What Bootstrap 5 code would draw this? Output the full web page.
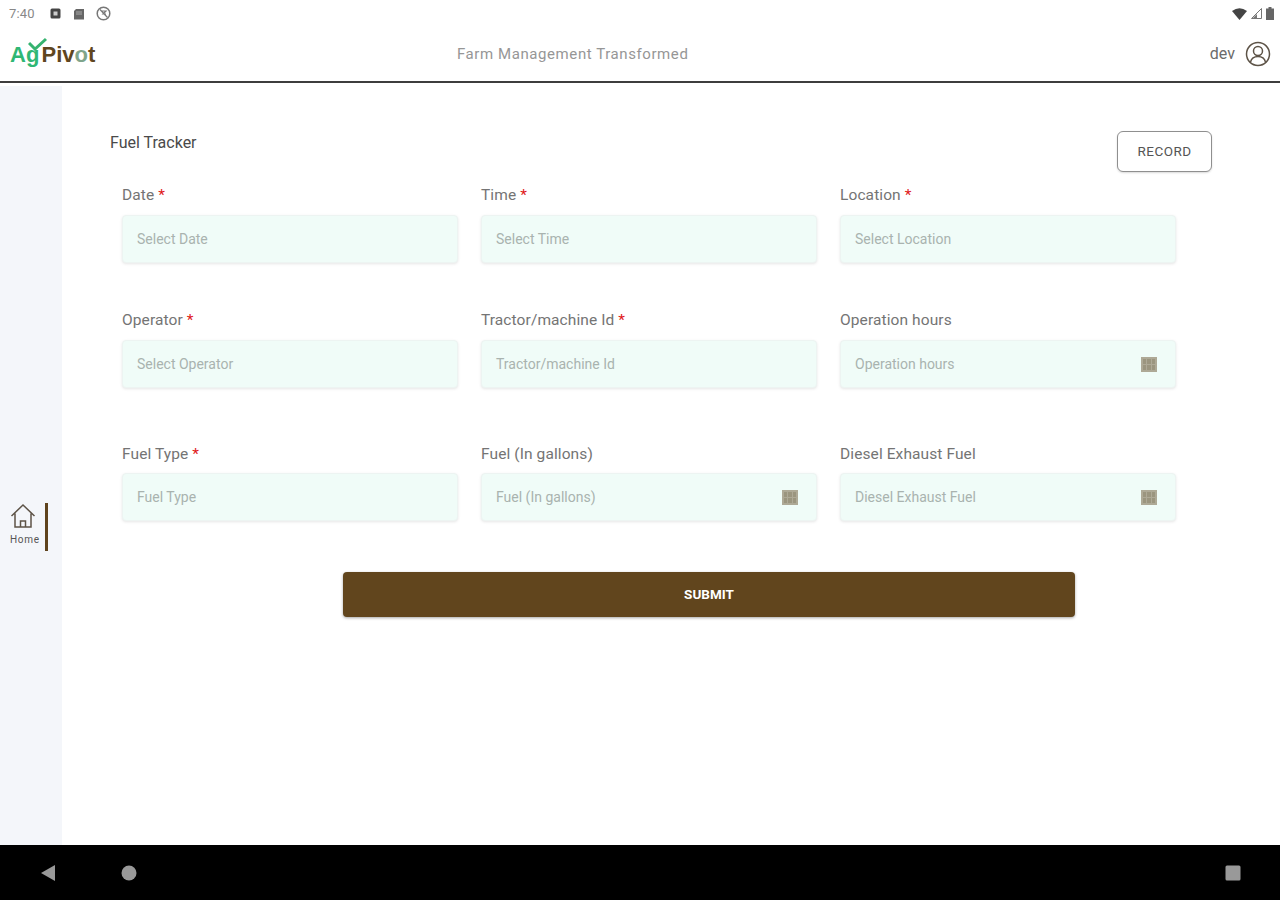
<!DOCTYPE html>
<html lang="en">
<head>
<meta charset="utf-8">
<title>Fuel Tracker</title>
<link href="https://cdn.jsdelivr.net/npm/bootstrap@5.3.0/dist/css/bootstrap.min.css" rel="stylesheet">
<style>
html,body{height:900px;overflow:hidden;background:#fff;font-family:Roboto,"Liberation Sans",sans-serif;}
.shell{height:900px;}
.statusbar{height:27px;padding:0 6px 0 9px;color:#555;font-size:12px;line-height:1;}
.status-time{color:#888;width:28px;margin-right:13px;font-size:13px;letter-spacing:.2px;}
.status-gap{margin-right:12px;}
.status-gap-last{margin-right:11px;}
.topbar{height:56px;border-bottom:2px solid #3d3d3d;padding:0 9px 0 10px;position:relative;}
.brand{width:447px;font-family:"Liberation Sans",sans-serif;font-weight:700;font-size:22px;line-height:1;position:relative;letter-spacing:.05px;margin-top:2px;}
.brand-ag{color:#2fb774;margin-right:2px;}
.brand-pv{color:#5f4620;}
.brand-o{color:#7fa58c;}
.brand-check{position:absolute;left:18px;top:-7px;}
.tagline{width:230px;color:#969696;font-size:15px;text-align:center;letter-spacing:.58px;white-space:nowrap;}
.dev{color:#6b6b6b;font-size:16px;}
.avatar{margin-left:2px;}
.bodyrow{height:762px;padding-top:3px;}
.sidebar{width:62px;background:#f4f6fa;flex:none;}
.nav-home{height:48px;margin-top:417px;padding-left:10px;}
.home-label{font-size:10px;color:#555;line-height:1;margin-top:6px;letter-spacing:.7px;}
.home-bar{width:3px;height:48px;background:#5f431d;margin-left:5px;}
.main-area{padding:45px 68px 0 48px;min-width:0;}
.title-row{height:41px;}
.page-title{font-size:16px;color:#4a4a4a;line-height:24px;}
.btn-record{width:95px;height:41px;border:1px solid #8f8f8f;border-radius:6px;background:#fff;color:#555;font-size:13.500px;letter-spacing:.45px;padding:0;box-shadow:0 1px 2px rgba(0,0,0,.15);}
.form-stack{padding-left:12px;margin-top:12px;width:1065px;}
.field-grid{display:grid;grid-template-columns:336px 336px 336px;column-gap:23px;}
.grid-one{margin-bottom:46px;}
.grid-two{margin-bottom:55px;}
.field-label{display:block;font-size:15.500px;color:#747474;line-height:22px;margin-bottom:9px;height:22px;letter-spacing:.1px;}
.grid-last .field-label{margin-bottom:8px;}
.req{color:#e01818;}
.field-box{height:48px;background:#f0fcf8;border:1px solid #edf4f2;border-radius:4px;box-shadow:0 1px 3px rgba(0,0,0,.1);padding:0 18px 0 14px;color:#a9b3af;font-size:14px;}
.calc{width:16px;height:15px;background:#aea996;flex:none;display:grid;grid-template-columns:repeat(3,1fr);gap:1px;padding:2px;}
.calc i{background:#9b957f;display:block;}
.submit-wrap{padding-left:221px;margin-top:51px;}
.btn-submit{width:732px;height:45px;background:#61451d;border:0;border-radius:4px;color:#fff;font-weight:700;font-size:13.500px;box-shadow:0 1px 3px rgba(0,0,0,.35);padding:0;}
.btn-submit:hover{background:#61451d;color:#fff;}
.navstrip{height:55px;background:#000;padding:0 39px 0 40px;}
.nav-mid{margin-left:65px;}
</style>
</head>
<body>
<div class="shell d-flex flex-column">
  <div class="statusbar d-flex align-items-center">
    <span class="status-time">7:40</span>
    <svg width="11" height="11" viewBox="0 0 11 11" class="status-gap"><rect x=".5" y=".5" width="10" height="10" rx="1.500" fill="#444"/><rect x="3.500" y="3.500" width="4" height="4" fill="#ccc"/></svg>
    <svg width="12" height="12" viewBox="0 0 12 12" class="status-gap-last"><path d="M3 1h8v10.500H1V3z" fill="#666"/><path d="M3 4h6M3 6h6" stroke="#bbb" stroke-width=".8"/></svg>
    <svg width="15" height="15" viewBox="0 0 15 15"><circle cx="7.500" cy="7.500" r="6.300" fill="none" stroke="#777" stroke-width="1.500"/><path d="M4 3.500l7.500 8M5 5h5l-3 3h3" fill="none" stroke="#777" stroke-width="1.200"/></svg>
    <div class="ms-auto d-flex align-items-center gap-1">
      <svg width="15" height="12" viewBox="0 0 15 12"><path d="M0 3Q7.500-2.500 15 3L7.500 12z" fill="#444"/></svg>
      <svg width="11" height="11" viewBox="0 0 11 11"><path d="M10.500.5V10.500H.5z" fill="none" stroke="#777"/><path d="M6 6v4H2z" fill="#777"/></svg>
      <svg width="8" height="13" viewBox="0 0 8 13"><path d="M2.500 0h3v1.500H8V13H0V1.500h2.500z" fill="#666"/></svg>
    </div>
  </div>

  <header class="topbar d-flex align-items-center">
    <div class="brand">
      <span class="brand-ag">Ag</span><span class="brand-pv">Piv</span><span class="brand-o">o</span><span class="brand-pv">t</span>
      <svg class="brand-check" width="20" height="14" viewBox="0 0 20 14"><path d="M1 6l6 6L18 2" fill="none" stroke="#35b36f" stroke-width="3"/></svg>
    </div>
    <div class="tagline">Farm Management Transformed</div>
    <div class="ms-auto d-flex align-items-center gap-2">
      <span class="dev">dev</span>
      <svg width="26" height="26" viewBox="0 0 26 26" class="avatar"><circle cx="13" cy="13" r="11.500" fill="none" stroke="#5d5347" stroke-width="1.500"/><circle cx="13" cy="10" r="4.500" fill="none" stroke="#5d5347" stroke-width="1.500"/><path d="M5.500 21c1-4 4-5.500 7.500-5.500s6.500 1.500 7.500 5.500" fill="none" stroke="#5d5347" stroke-width="1.500"/></svg>
    </div>
  </header>

  <div class="bodyrow d-flex">
    <aside class="sidebar">
      <div class="nav-home d-flex">
        <div class="d-flex flex-column align-items-start">
          <svg width="26" height="26" viewBox="0 0 26 26"><path d="M1.500 13L13 2l11.500 11M5 10.500V24h16V10.500M10.500 24v-6h5v6" fill="none" stroke="#5d5347" stroke-width="1.500"/></svg>
          <span class="home-label">Home</span>
        </div>
        <div class="home-bar"></div>
      </div>
    </aside>
    <main class="main-area flex-grow-1">
      <div class="title-row d-flex justify-content-between align-items-start">
        <div class="page-title">Fuel Tracker</div>
        <button type="button" class="btn btn-record">RECORD</button>
      </div>
      <form class="form-stack">
        <div class="field-grid grid-one">
          <div><label class="field-label">Date <span class="req">*</span></label><div class="field-box d-flex align-items-center">Select Date</div></div>
          <div><label class="field-label">Time <span class="req">*</span></label><div class="field-box d-flex align-items-center">Select Time</div></div>
          <div><label class="field-label">Location <span class="req">*</span></label><div class="field-box d-flex align-items-center">Select Location</div></div>
        </div>
        <div class="field-grid grid-two">
          <div><label class="field-label">Operator <span class="req">*</span></label><div class="field-box d-flex align-items-center">Select Operator</div></div>
          <div><label class="field-label">Tractor/machine Id <span class="req">*</span></label><div class="field-box d-flex align-items-center">Tractor/machine Id</div></div>
          <div><label class="field-label">Operation hours</label><div class="field-box d-flex align-items-center justify-content-between">Operation hours<span class="calc"><i></i><i></i><i></i><i></i><i></i><i></i></span></div></div>
        </div>
        <div class="field-grid grid-last">
          <div><label class="field-label">Fuel Type <span class="req">*</span></label><div class="field-box d-flex align-items-center">Fuel Type</div></div>
          <div><label class="field-label">Fuel (In gallons)</label><div class="field-box d-flex align-items-center justify-content-between">Fuel (In gallons)<span class="calc"><i></i><i></i><i></i><i></i><i></i><i></i></span></div></div>
          <div><label class="field-label">Diesel Exhaust Fuel</label><div class="field-box d-flex align-items-center justify-content-between">Diesel Exhaust Fuel<span class="calc"><i></i><i></i><i></i><i></i><i></i><i></i></span></div></div>
        </div>
        <div class="submit-wrap">
          <button type="button" class="btn btn-submit">SUBMIT</button>
        </div>
      </form>
    </main>
  </div>

  <div class="navstrip d-flex align-items-center">
    <svg width="16" height="16" viewBox="0 0 16 16"><path d="M15 0v16L1 8z" fill="#999"/></svg>
    <svg class="nav-mid" width="16" height="16" viewBox="0 0 16 16"><circle cx="8" cy="8" r="7.500" fill="#999"/></svg>
    <svg class="ms-auto" width="16" height="16" viewBox="0 0 16 16"><rect x=".5" y=".5" width="15" height="15" rx="1.500" fill="#999"/></svg>
  </div>
</div>
<script src="https://cdn.jsdelivr.net/npm/bootstrap@5.3.0/dist/js/bootstrap.bundle.min.js"></script>
</body>
</html>
